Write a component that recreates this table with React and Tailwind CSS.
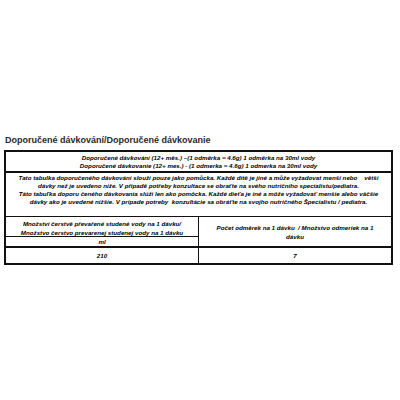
export default function App() {
  const cell = "font-['Liberation_Sans',Arial,sans-serif] italic font-bold text-[6.2px] leading-[8px] text-black text-center whitespace-nowrap";
  return (
    <div className="w-[400px] h-[400px] bg-white pt-[135px]">
      <div className="pl-[5px] font-['Liberation_Sans',Arial,sans-serif] font-bold text-[9px] leading-[11px] text-[#2a2a2a]">
        Doporučené dávkování/Doporučené dávkovanie
      </div>
      <div className="mt-[4px] ml-[4px] w-[389px] border-2 border-[#111]">
        <div className={`${cell} border-b-2 border-[#111] pt-[2px] pb-[1px]`}>
          Doporučené dávkování (12+ měs.) –(1 odměrka = 4.6g) 1 odměrka na 30ml vody
          <br />
          Doporučené dávkovanie (12+ mes.) - (1 odmerka = 4.6g) 1 odmerka na 30ml vody
        </div>
        <div className={`${cell} h-[44px] pt-[1px] border-b border-[#111]`}>
          <span className="whitespace-pre">Tato tabulka doporučeného dávkování slouží pouze jako pomůcka. Každé dítě je jiné a může vyžadovat menší nebo    větší</span>
          <br />
          dávky než je uvedeno níže. V případě potřeby konzultace se obraťte na svého nutričního specialistu/pediatra.
          <br />
          Táto tabuľka doporu čeného dávkovania slúži len ako pomôcka. Každé dieťa je iné a môže vyžadovať menšie alebo väčšie
          <br />
          <span className="whitespace-pre">dávky ako je uvedené nižšie. V prípade potreby  konzultácie sa obráťte na svojho nutričného Špecialistu / pediatra.</span>
        </div>
        <div className="grid grid-cols-[193px_1fr] border-b-2 border-[#111]">
          <div className="border-r border-[#111] flex flex-col">
            <div className={`${cell} h-[20px] pt-[2px] leading-[9px] border-b border-[#111]`}>
              Množství čerstvě převařené studené vody na 1 dávku/
              <br />
              Množstvo čerstvo prevarenej studenej vody na 1 dávku
            </div>
            <div className={`${cell} h-[9px] leading-[9px]`}>ml</div>
          </div>
          <div className={`${cell} leading-[9px] flex items-center justify-center`}>
            <div>
              Počet odměrek na 1 dávku &nbsp;/ Množstvo odmeriek na 1
              <br />
              dávku
            </div>
          </div>
        </div>
        <div className="grid grid-cols-[193px_1fr] h-[15px]">
          <div className={`${cell} border-r border-[#111] flex items-center justify-center`}>210</div>
          <div className={`${cell} flex items-center justify-center`}>7</div>
        </div>
      </div>
    </div>
  );
}
